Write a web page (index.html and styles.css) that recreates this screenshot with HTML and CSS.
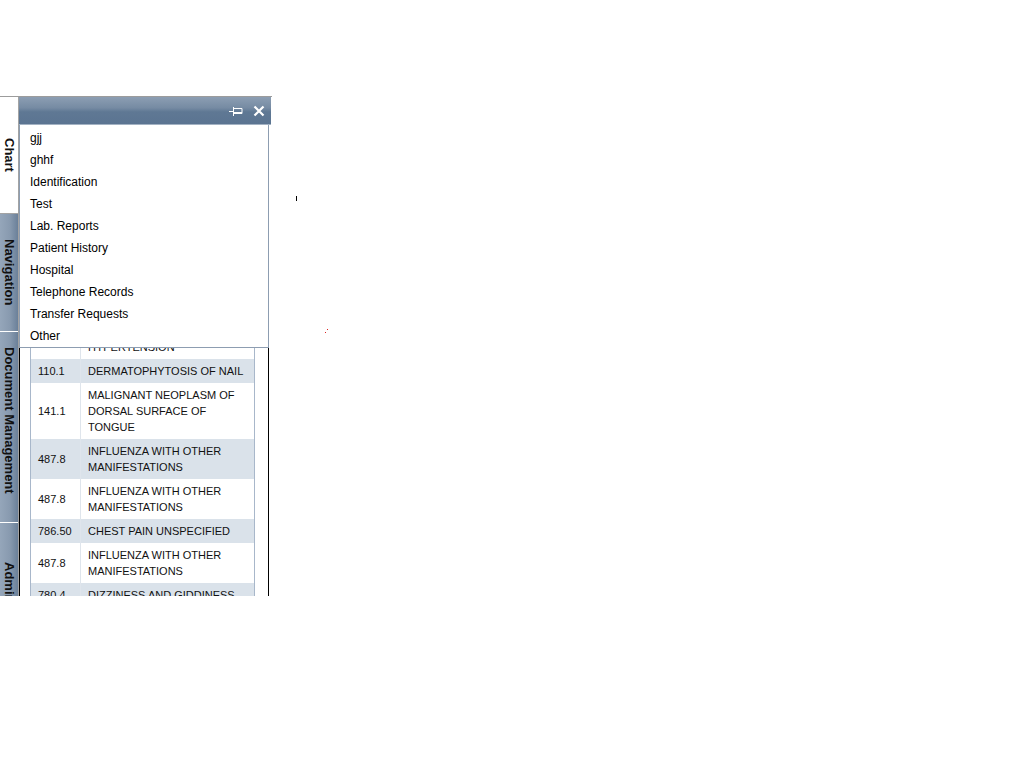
FILE: index.html
```html
<!DOCTYPE html>
<html lang="en">
<head>
    <meta charset="UTF-8">
    <title>Chart</title>
    <link rel="stylesheet" href="styles.css">
</head>
<body>
<div class="dock">
    <div class="side-tabs">
        <div class="side-tab active tab-chart"><span>Chart</span></div>
        <div class="side-tab tab-nav"><span>Navigation</span></div>
        <div class="side-tab tab-docs"><span>Document Management</span></div>
        <div class="side-tab tab-admin"><span>Administration</span></div>
    </div>
    <div class="pane">
        <div class="pane-header">
            <svg class="pin" width="14" height="10" viewBox="0 0 14 10">
                <path d="M0 5.5h4M4.5 1v9M4.5 2.5h8.5v5h-8.5M4.5 6.5h8.5" stroke="#fff" stroke-width="1" fill="none"/>
            </svg>
            <svg class="close" width="12" height="12" viewBox="0 0 12 12">
                <path d="M1.5 1.5l9 9M10.5 1.5l-9 9" stroke="#fff" stroke-width="2.2" fill="none"/>
            </svg>
        </div>
        <div class="pane-body">
            <!-- grid is scrolled down; rows above sit under the menu -->
            <table class="dx-grid">
                <colgroup><col class="col-code"><col></colgroup>
                <tr><td>401.9</td><td class="desc">UNSPECIFIED ESSENTIAL HYPERTENSION</td></tr>
                <tr><td>110.1</td><td class="desc">DERMATOPHYTOSIS OF NAIL</td></tr>
                <tr><td>141.1</td><td class="desc">MALIGNANT NEOPLASM OF DORSAL SURFACE OF TONGUE</td></tr>
                <tr><td>487.8</td><td class="desc">INFLUENZA WITH OTHER MANIFESTATIONS</td></tr>
                <tr><td>487.8</td><td class="desc">INFLUENZA WITH OTHER MANIFESTATIONS</td></tr>
                <tr><td>786.50</td><td class="desc">CHEST PAIN UNSPECIFIED</td></tr>
                <tr><td>487.8</td><td class="desc">INFLUENZA WITH OTHER MANIFESTATIONS</td></tr>
                <tr><td>780.4</td><td class="desc">DIZZINESS AND GIDDINESS</td></tr>
            </table>

            <ul class="chart-menu">
                <li>gjj</li>
                <li>ghhf</li>
                <li>Identification</li>
                <li>Test</li>
                <li>Lab. Reports</li>
                <li>Patient History</li>
                <li>Hospital</li>
                <li>Telephone Records</li>
                <li>Transfer Requests</li>
                <li>Other</li>
            </ul>
        </div>
    </div>
</div>

<span class="speck speck-tick"></span>
<span class="speck speck-red1"></span>
<span class="speck speck-red2"></span>
</body>
</html>
```

FILE: styles.css
```css
html,
body {
    margin: 0;
    background: #fff;
}

body {
    padding-top: 96px;

    font-family: "Liberation Sans", Arial, sans-serif;
}

.dock {
    display: flex;

    width: 272px;
    height: 500px;

    overflow: hidden;
    box-sizing: border-box;

    border-top: 1px solid #9c9c9c;
}

/* vertical tabs on the left */
.side-tabs {
    display: flex;
    flex-direction: column;
    flex: none;

    width: 18px;

    border-right: 1px solid #a3a3a3;
}

.side-tab {
    display: flex;
    align-items: center;
    justify-content: center;
    flex: none;

    box-sizing: border-box;

    border-bottom: 1px solid #fff;
    background: linear-gradient(to right, #95a6ba, #889aaf 55%, #6a8099);
}

.side-tab span {
    writing-mode: vertical-rl;

    font-size: 13px;
    font-weight: bold;
    line-height: 18px;
    white-space: nowrap;

    color: #111;
}

.side-tab.active {
    border-bottom-color: #a3a3a3;
    background: #fff;
}

.tab-chart {
    height: 117px;
}

.tab-nav {
    height: 118px;
}

.tab-docs {
    height: 191px;
    padding-bottom: 14px;
}

.tab-admin {
    height: 171px;
}

/* docked pane */
.pane {
    display: flex;
    flex-direction: column;
    flex: none;

    width: 252px;
}

.pane-header {
    display: flex;
    align-items: center;
    justify-content: flex-end;
    gap: 10px;
    flex: none;

    height: 27px;
    padding-right: 6px;

    border-bottom: 1px solid #a3b2c3;
    background: linear-gradient(#8c9eb3 0%, #768ba3 40%, #5f7894 55%, #5b7491 100%);
}

.pane-header svg {
    display: block;
}

.pane-body {
    position: relative;
    flex: 1;

    width: 250px;
    padding: 193px 13px 0 10px;

    box-sizing: border-box;

    border-left: 1px solid #000;
    border-right: 1px solid #000;
}

/* diagnosis grid */
.dx-grid {
    width: 225px;

    table-layout: fixed;
    border-collapse: collapse;

    border: 1px solid #a8b7ca;

    font-size: 11px;
    line-height: 16px;
    color: #111;
}

.col-code {
    width: 50px;
}

.dx-grid td {
    padding: 4px 7px;

    vertical-align: middle;
}

.dx-grid td.desc {
    border-left: 1px solid #dfe5ec;
}

.dx-grid tr:nth-child(even) td {
    background: #dae2ea;
}

/* dropdown menu over the grid */
.chart-menu {
    position: absolute;
    top: 0;
    left: -1px;

    width: 250px;
    margin: 0;
    padding: 2px 0 0;

    box-sizing: border-box;
    list-style: none;

    border: 1px solid #8d9db1;
    border-top: none;
    background: #fff;
}

.chart-menu li {
    padding-left: 10px;

    font-size: 12px;
    line-height: 22px;

    color: #000;
}

.speck {
    position: absolute;

    width: 1px;
    height: 1px;
}

.speck-tick {
    top: 196px;
    left: 296px;

    height: 5px;

    background: #000;
}

.speck-red1 {
    top: 329px;
    left: 327px;

    background: #d22;
}

.speck-red2 {
    top: 332px;
    left: 325px;

    background: #d22;
}
```
